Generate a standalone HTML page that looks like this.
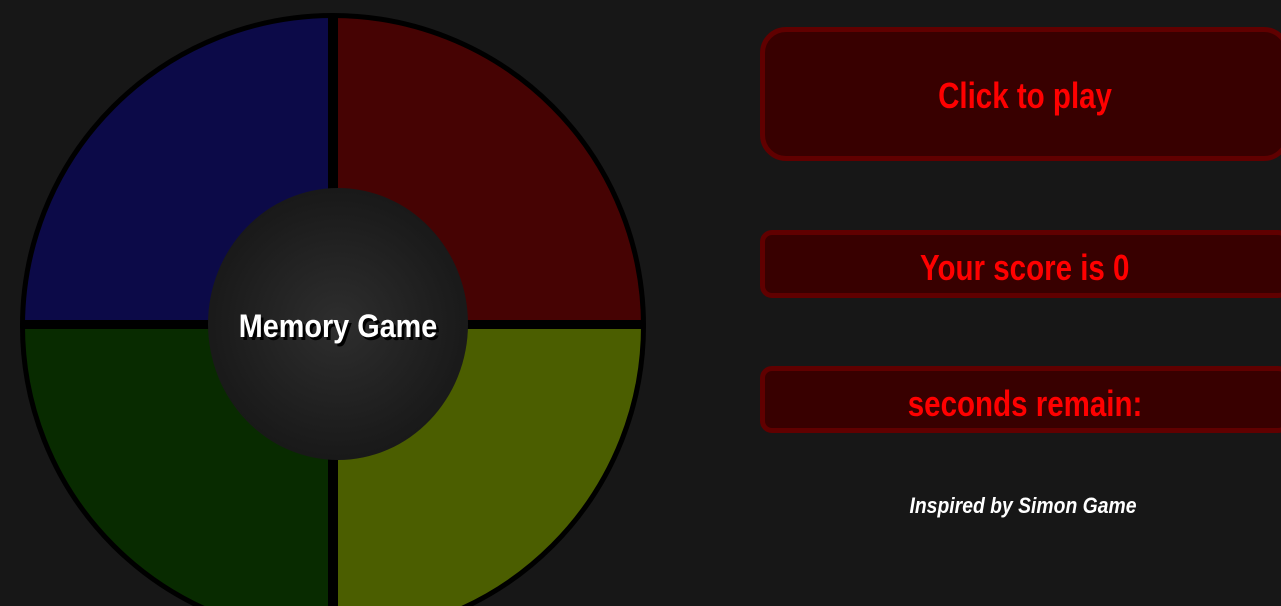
<!DOCTYPE html>
<html style="overflow:hidden;width:1281px;height:606px;"><head><style>
html,body{margin:0;padding:0;background:#171717;width:1281px;height:606px;overflow:hidden;font-family:"Liberation Sans",sans-serif;}
.page{position:relative;width:1281px;height:606px;overflow:hidden;}
.inner{position:absolute;left:208px;top:188px;width:260px;height:272px;border-radius:50%;background:radial-gradient(circle at 50% 50%,#2e2e2e 0%,#1c1c1c 60%,#111 100%);}
.title{position:absolute;left:188px;top:308px;width:300px;text-align:center;color:#fff;font-weight:bold;font-size:32px;text-shadow:3px 3px 0 #000;transform:scaleX(0.9);}
.box{position:absolute;left:760px;width:530px;box-sizing:border-box;background:#380000;border:5px solid #600000;color:#ff0000;font-weight:bold;text-align:center;}
.box span{display:inline-block;transform:scaleX(0.82);}
.foot{position:absolute;left:760px;width:525px;top:493px;text-align:center;color:#fff;font-style:italic;font-weight:bold;font-size:22px;}
.foot span{display:inline-block;transform:scaleX(0.88);}
</style></head><body><div class="page">
<svg width="660" height="606" style="position:absolute;left:0;top:0" viewBox="0 0 660 606">
 <defs><clipPath id="c"><circle cx="333" cy="326" r="310"/></clipPath></defs>
 <g clip-path="url(#c)">
  <rect x="0" y="0" width="660" height="660" fill="#000"/>
  <rect x="0" y="0" width="328" height="320" fill="#0c0a48"/>
  <rect x="338" y="0" width="322" height="320" fill="#460303"/>
  <rect x="0" y="329" width="328" height="330" fill="#082b00"/>
  <rect x="338" y="329" width="322" height="330" fill="#4b5e00"/>
 </g>
 <circle cx="333" cy="326" r="310.5" fill="none" stroke="#000" stroke-width="5"/>
</svg>
<div class="inner"></div>
<div class="title">Memory Game</div>
<div class="box" style="top:27px;height:134px;border-radius:26px;font-size:36px;line-height:128px;"><span>Click to play</span></div>
<div class="box" style="top:230px;height:68px;border-radius:12px;font-size:36px;line-height:66px;"><span>Your score is 0</span></div>
<div class="box" style="top:366px;height:67px;border-radius:12px;font-size:36px;line-height:66px;"><span>seconds remain:</span></div>
<div class="foot"><span>Inspired by Simon Game</span></div>
</div></body></html>
